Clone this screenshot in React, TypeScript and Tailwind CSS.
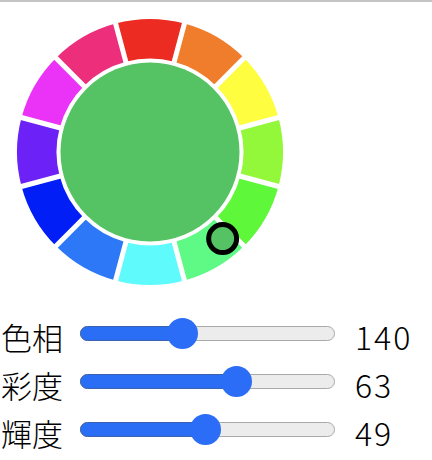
import React from 'react';

const CX = 150;
const CY = 150;
const R_IN = 93.5;
const R_OUT = 133;

const SEGMENTS = [
  '#ec2b22', '#f07d2c', '#fefd40', '#93f73a', '#5ff73a', '#5ff985',
  '#5ffbfc', '#2c78f6', '#001ef5', '#6c22f6', '#ea33f7', '#ec2e7b',
];

const SLIDERS = [
  { label: '色相', value: 140, max: 360 },
  { label: '彩度', value: 63, max: 100 },
  { label: '輝度', value: 49, max: 100 },
];

function pt(r: number, deg: number) {
  const a = (deg * Math.PI) / 180;
  return [CX + r * Math.sin(a), CY - r * Math.cos(a)];
}

function sector(start: number, end: number) {
  const [x1, y1] = pt(R_OUT, start);
  const [x2, y2] = pt(R_OUT, end);
  const [x3, y3] = pt(R_IN, end);
  const [x4, y4] = pt(R_IN, start);
  return `M${x1} ${y1} A${R_OUT} ${R_OUT} 0 0 1 ${x2} ${y2} L${x3} ${y3} A${R_IN} ${R_IN} 0 0 0 ${x4} ${y4} Z`;
}

function Wheel() {
  const [sx, sy] = pt(113, 140);
  return (
    <svg width="300" height="300" viewBox="0 0 300 300" className="block">
      {SEGMENTS.map((c, i) => (
        <path key={i} d={sector(i * 30 - 15, i * 30 + 15)} fill={c} />
      ))}
      {SEGMENTS.map((_, i) => {
        const [ax, ay] = pt(85, i * 30 + 15);
        const [bx, by] = pt(140, i * 30 + 15);
        return <line key={i} x1={ax} y1={ay} x2={bx} y2={by} stroke="#fff" strokeWidth="5" />;
      })}
      <circle cx={CX} cy={CY} r="89.5" fill="#55c263" />
      <circle cx={sx} cy={sy} r="14" fill="#55c263" stroke="#000" strokeWidth="5" />
    </svg>
  );
}

function Slider({ value, max }: { value: number; max: number }) {
  // thumb travels between 15px and 240px inside a 255px track
  const pos = 15 + (value / max) * 225;
  return (
    <div className="relative w-[255px] h-[31px]">
      <div className="absolute left-0 right-0 top-[8px] h-[15px] rounded-full bg-[#ececec] border border-[#a9a9a9]" />
      <div
        className="absolute left-0 top-[8px] h-[15px] rounded-full bg-[#2a6ef5] border border-[#3b64b0]"
        style={{ width: pos }}
      />
      <div
        className="absolute top-0 w-[31px] h-[31px] -ml-[15.5px] rounded-full bg-[#2b6df6]"
        style={{ left: pos }}
      />
    </div>
  );
}

export default function App() {
  return (
    <div className="w-[432px] h-[460px] bg-white overflow-hidden text-black font-['Noto_Sans_CJK_JP',sans-serif] font-light">
      <div className="h-[2px] bg-[#c4c4c4]" />
      <Wheel />
      <div className="mt-[7px] flex flex-col">
        {SLIDERS.map(s => (
          <div key={s.label} className="h-12 flex items-center">
            <div className="w-[80px] text-[31px] leading-none pl-[1px] pt-[6px]">{s.label}</div>
            <Slider value={s.value} max={s.max} />
            <div className="ml-5 text-[32px] leading-none pt-[6px] tracking-[2px]">{s.value}</div>
          </div>
        ))}
      </div>
    </div>
  );
}
